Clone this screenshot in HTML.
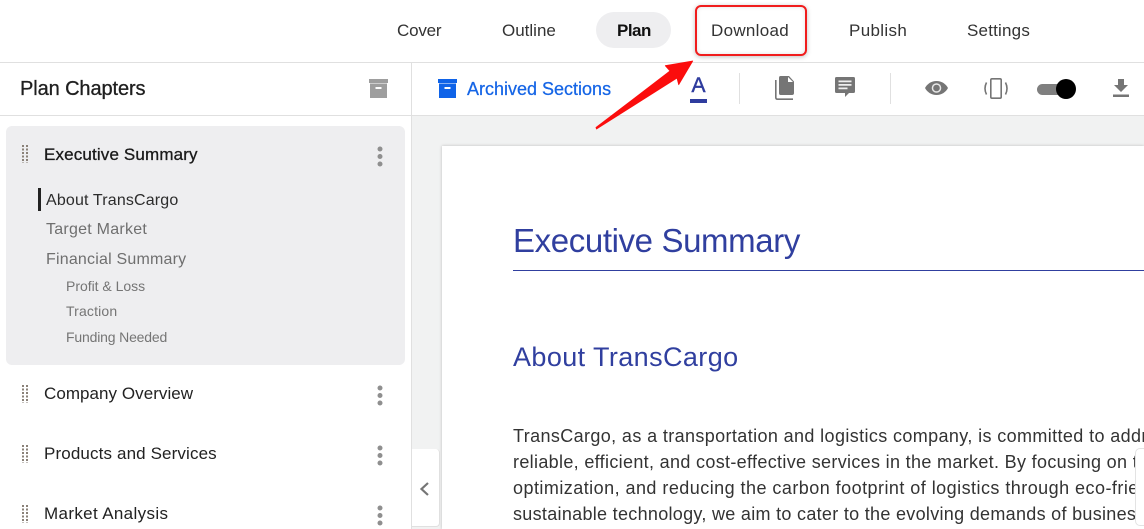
<!DOCTYPE html>
<html><head><meta charset="utf-8"><style>
html,body{margin:0;padding:0;background:#fff}
#p{position:relative;width:1144px;height:529px;overflow:hidden;background:#fff;font-family:"Liberation Sans",sans-serif;color:#222}
.t{position:absolute;white-space:nowrap;line-height:20px;height:20px}
.a{position:absolute}
svg{position:absolute;overflow:visible}
.n{font-size:17px;color:#333;top:21px}
.c{font-size:17px;color:#222;left:44px}
.s{font-size:16px;color:#6f6f6f;left:46px}
.ss{font-size:14px;color:#757575;left:66px}
.b{font-size:18px;color:#333;left:513px;line-height:26px;height:26px}
</style></head><body><div id="p">
<div class="a" style="left:596px;top:12px;width:75px;height:36px;border-radius:18px;background:#eeeef0"></div>
<div class="t n" style="left:397px;letter-spacing:-.2px">Cover</div>
<div class="t n" style="left:502px;letter-spacing:0">Outline</div>
<div class="t n" style="left:617px;font-weight:bold;color:#111;letter-spacing:-.5px">Plan</div>
<div class="t n" style="left:711px;letter-spacing:.3px">Download</div>
<div class="t n" style="left:849px;letter-spacing:.35px">Publish</div>
<div class="t n" style="left:967px;letter-spacing:.2px">Settings</div>

<div class="a" style="left:0;top:62px;width:1144px;height:1px;background:#e0e0e0"></div>
<div class="a" style="left:0;top:115px;width:1144px;height:1px;background:#e0e0e0"></div>
<div class="a" style="left:411px;top:62px;width:1px;height:467px;background:#e0e0e0"></div>
<div class="a" style="left:412px;top:116px;width:732px;height:413px;background:#f1f2f2"></div>

<div class="t" style="left:20px;top:79px;font-size:20px;color:#1f1f1f;-webkit-text-stroke:.3px #1f1f1f;letter-spacing:-.1px">Plan Chapters</div>
<svg style="left:369px;top:79px" width="19" height="19" viewBox="0 0 19 19"><path fill="#9e9e9e" d="M0 0h19v4H0zM1 4.500h17V19H1z"/><rect x="6.500" y="8" width="6" height="2" fill="#fff"/></svg>

<svg style="left:438px;top:79px" width="19" height="19" viewBox="0 0 19 19"><path fill="#0f63e8" d="M0 0h19v4H0zM1 4.500h17V19H1z"/><rect x="6.500" y="8" width="6" height="2" fill="#fff"/></svg>
<div class="t" style="left:467px;top:79px;font-size:18px;color:#1565e6;-webkit-text-stroke:.25px #1565e6;letter-spacing:0">Archived Sections</div>

<div class="t" style="left:690px;top:76px;width:17px;text-align:center;font-size:21px;color:#2f3c9e;-webkit-text-stroke:.5px #2f3c9e">A</div>
<div class="a" style="left:690px;top:99px;width:17px;height:4px;background:#2f3c9e"></div>
<div class="a" style="left:739px;top:73px;width:1px;height:31px;background:#e0e0e0"></div>
<svg style="left:775px;top:76px" width="20" height="24" viewBox="0 0 20 24"><path fill="none" stroke="#757575" stroke-width="1.600" d="M.8 4v17.500q0 1.700 1.700 1.700H18"/><path fill="#757575" d="M5.500 0H14l5 5.500V17q0 2-2 2H5.500q-1.500 0-1.500-2V2q0-2 1.500-2z"/><path fill="#fff" d="M13 1l5 5h-5z"/></svg>
<svg style="left:835px;top:77px" width="20" height="20" viewBox="0 0 20 20"><path fill="#757575" d="M1.500 0h17Q20 0 20 1.500v13q0 1.500-1.500 1.500H14l-4 4v-4H1.500Q0 16 0 14.500v-13Q0 0 1.500 0z"/><path fill="#eee" d="M3.500 3.500h13v1.800h-13zM3.500 7h13v1.800h-13zM3.500 10.500h9v1.800h-9z"/></svg>
<div class="a" style="left:890px;top:73px;width:1px;height:31px;background:#e0e0e0"></div>
<svg style="left:925px;top:81px" width="23" height="14" viewBox="0 0 23 14"><path fill="#757575" d="M11.500 0C6.500 0 2.200 2.800 0 7c2.200 4.200 6.500 7 11.500 7S20.800 11.200 23 7C20.800 2.800 16.500 0 11.500 0z"/><circle cx="11.500" cy="7" r="4.800" fill="#e8e8e8"/><circle cx="11.500" cy="7" r="3.300" fill="#757575"/></svg>
<svg style="left:983px;top:78px" width="26" height="21" viewBox="0 0 26 21"><rect x="7.800" y=".8" width="10.400" height="19.400" rx="1.200" fill="none" stroke="#757575" stroke-width="1.600"/><path fill="none" stroke="#757575" stroke-width="1.600" d="M3.500 4.500Q.5 10.500 3.500 16.500M22.500 4.500Q25.500 10.500 22.500 16.500"/></svg>
<div class="a" style="left:1037px;top:84px;width:30px;height:11px;border-radius:6px;background:#7f7f7f"></div>
<div class="a" style="left:1056px;top:79px;width:20px;height:20px;border-radius:50%;background:#000"></div>
<svg style="left:1113px;top:79px" width="16" height="18" viewBox="0 0 16 18"><path fill="#757575" d="M5 0h6v6h4l-7 7-7-7h4zM0 15.500h16V18H0z"/></svg>

<div class="a" style="left:442px;top:146px;width:702px;height:383px;background:#fff;box-shadow:0 0 3px rgba(0,0,0,.22)"></div>
<div class="t" style="left:513px;top:221px;font-size:33px;line-height:40px;height:40px;color:#303f9f;letter-spacing:-.38px">Executive Summary</div>
<div class="a" style="left:513px;top:270px;width:631px;height:1px;background:#303f9f"></div>
<div class="t" style="left:513px;top:340px;font-size:27px;line-height:34px;height:34px;color:#303f9f;letter-spacing:.4px">About TransCargo</div>
<div class="t b" style="top:423px;letter-spacing:.38px">TransCargo, as a transportation and logistics company, is committed to addressing</div>
<div class="t b" style="top:449px;letter-spacing:.33px">reliable, efficient, and cost-effective services in the market. By focusing on technology</div>
<div class="t b" style="top:475px;letter-spacing:.46px">optimization, and reducing the carbon footprint of logistics through eco-friendly and</div>
<div class="t b" style="top:501px;letter-spacing:.3px">sustainable technology, we aim to cater to the evolving demands of businesses and</div>
<div class="a" style="left:1135px;top:448px;width:12px;height:78px;background:#fff;border:1px solid #e3e3e3;border-radius:5px 0 0 5px;box-sizing:border-box"></div>

<div class="a" style="left:412px;top:449px;width:28px;height:78px;background:#fff;border-right:1px solid #e0e0e0;border-bottom:1px solid #e0e0e0;border-radius:0 4px 4px 0;box-sizing:border-box"></div>
<svg style="left:419px;top:482px" width="10" height="14" viewBox="0 0 10 14"><path fill="none" stroke="#757575" stroke-width="2.200" d="M9 1L2.500 7 9 13"/></svg>

<div class="a" style="left:6px;top:126px;width:399px;height:239px;border-radius:6px;background:#eeeef0"></div>
<div class="a" style="left:38px;top:188px;width:3px;height:23px;background:#222"></div>

<div class="t c" style="top:145px;color:#1a1a1a;-webkit-text-stroke:.3px #1a1a1a;letter-spacing:.15px">Executive Summary</div>
<div class="t s" style="top:191px;color:#2c2c2c;letter-spacing:.16px">About TransCargo</div>
<div class="t s" style="top:220px;letter-spacing:.25px">Target Market</div>
<div class="t s" style="top:250px;letter-spacing:.2px">Financial Summary</div>
<div class="t ss" style="top:276px;letter-spacing:-.02px">Profit &amp; Loss</div>
<div class="t ss" style="top:301px;letter-spacing:.15px">Traction</div>
<div class="t ss" style="top:327px;letter-spacing:-.17px">Funding Needed</div>
<div class="t c" style="top:384px;letter-spacing:.05px">Company Overview</div>
<div class="t c" style="top:444px;letter-spacing:.13px">Products and Services</div>
<div class="t c" style="top:504px;letter-spacing:.35px">Market Analysis</div>

<svg style="left:22px;top:145px" width="6" height="18" viewBox="0 0 6 18"><path stroke="#8a8178" stroke-width="2" stroke-dasharray="2 1.500" d="M1 0v18M5 0v18" fill="none"/></svg>
<svg style="left:22px;top:385px" width="6" height="18" viewBox="0 0 6 18"><path stroke="#8a8178" stroke-width="2" stroke-dasharray="2 1.500" d="M1 0v18M5 0v18" fill="none"/></svg>
<svg style="left:22px;top:445px" width="6" height="18" viewBox="0 0 6 18"><path stroke="#8a8178" stroke-width="2" stroke-dasharray="2 1.500" d="M1 0v18M5 0v18" fill="none"/></svg>
<svg style="left:22px;top:505px" width="6" height="18" viewBox="0 0 6 18"><path stroke="#8a8178" stroke-width="2" stroke-dasharray="2 1.500" d="M1 0v18M5 0v18" fill="none"/></svg>

<svg style="left:375px;top:146px" width="10" height="20" viewBox="0 0 10 20" fill="#8f8f8f"><circle cx="5" cy="3" r="2.500"/><circle cx="5" cy="10.500" r="2.500"/><circle cx="5" cy="18" r="2.500"/></svg>
<svg style="left:375px;top:385px" width="10" height="20" viewBox="0 0 10 20" fill="#8f8f8f"><circle cx="5" cy="3" r="2.500"/><circle cx="5" cy="10.500" r="2.500"/><circle cx="5" cy="18" r="2.500"/></svg>
<svg style="left:375px;top:445px" width="10" height="20" viewBox="0 0 10 20" fill="#8f8f8f"><circle cx="5" cy="3" r="2.500"/><circle cx="5" cy="10.500" r="2.500"/><circle cx="5" cy="18" r="2.500"/></svg>
<svg style="left:375px;top:505px" width="10" height="20" viewBox="0 0 10 20" fill="#8f8f8f"><circle cx="5" cy="3" r="2.500"/><circle cx="5" cy="10.500" r="2.500"/><circle cx="5" cy="18" r="2.500"/></svg>

<div class="a" style="left:695px;top:5px;width:112px;height:51px;border:2px solid #f01c1c;border-radius:6px;box-sizing:border-box;box-shadow:0 1px 5px rgba(0,0,0,.25),inset 0 0 4px rgba(0,0,0,.12)"></div>
<svg style="left:0;top:0" width="1144" height="529" viewBox="0 0 1144 529"><path fill="#fb0d0d" stroke="#fb0d0d" stroke-width=".8" stroke-linejoin="round" d="M692.700 61L665.300 65.700 670 71 596 127.500 596.500 129 677 78 678.700 84.700z"/></svg>
</div></body></html>
